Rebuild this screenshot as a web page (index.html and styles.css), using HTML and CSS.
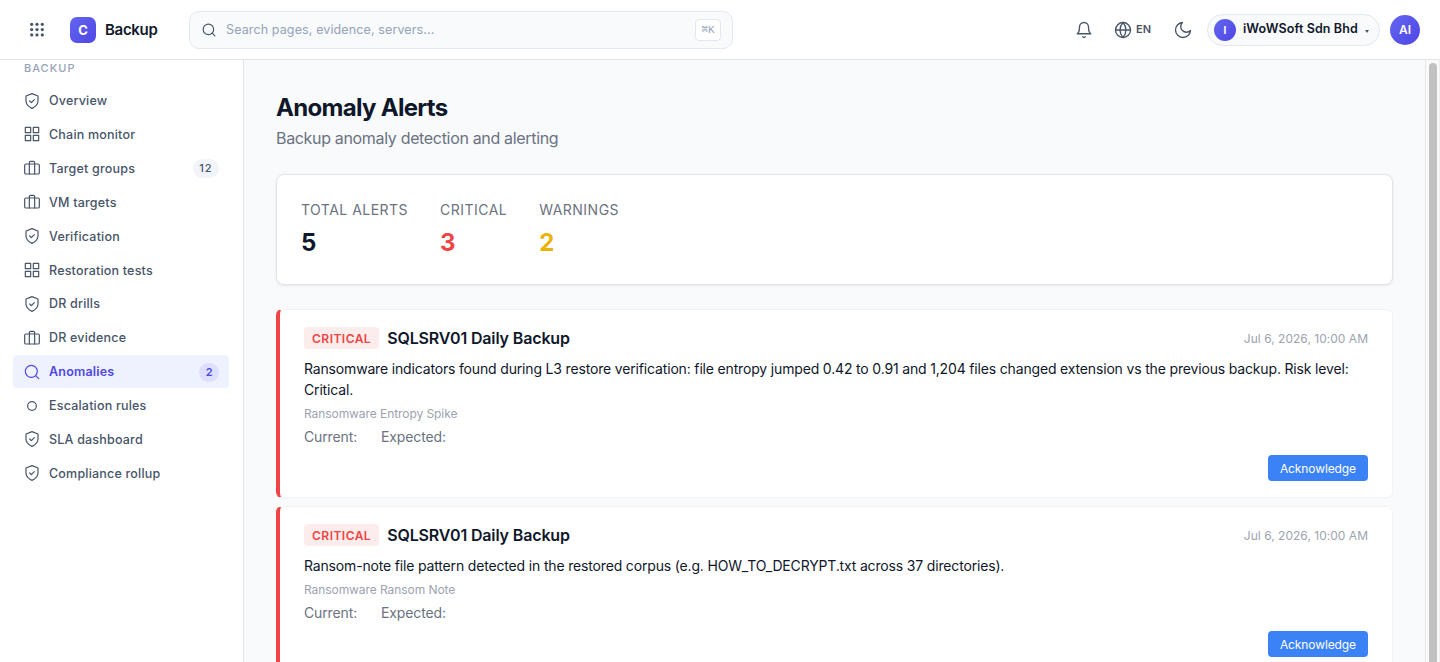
FILE: index.html
```
<!DOCTYPE html>
<html lang="en">
<head>
    <meta charset="UTF-8">
    <meta name="viewport" content="width=device-width, initial-scale=1.0">
    <title>Anomaly Alerts - Backup</title>
    <link rel="stylesheet" href="styles.css">
</head>
<body>
    <!-- icons shared by the sidebar and the top bar -->
    <svg class="sprite">
        <symbol id="i-shield" viewBox="0 0 24 24"><path d="M12 23s9-4 9-11V4.500l-9-3.500-9 3.500V12c0 7 9 11 9 11z"/><path d="m8.500 12 2.500 2.500 4.500-4.500"/></symbol>
        <symbol id="i-grid" viewBox="0 0 24 24"><rect x="2" y="2" width="8" height="8"/><rect x="14" y="2" width="8" height="8"/><rect x="14" y="14" width="8" height="8"/><rect x="2" y="14" width="8" height="8"/></symbol>
        <symbol id="i-case" viewBox="0 0 24 24"><rect x="1" y="6" width="22" height="15" rx="2"/><path d="M16 21V4a2 2 0 0 0-2-2h-4a2 2 0 0 0-2 2v17"/></symbol>
        <symbol id="i-search" viewBox="0 0 24 24"><circle cx="11" cy="11" r="9"/><path d="m22 22-4.5-4.5"/></symbol>
        <symbol id="i-circle" viewBox="0 0 24 24"><circle cx="12" cy="12" r="6.5"/></symbol>
    </svg>

    <header class="topbar">
        <svg class="apps" viewBox="0 0 16 16">
            <circle cx="2.7" cy="2.3" r="1.6"/><circle cx="8" cy="2.3" r="1.6"/><circle cx="13.3" cy="2.3" r="1.6"/>
            <circle cx="2.7" cy="7.6" r="1.6"/><circle cx="8" cy="7.6" r="1.6"/><circle cx="13.3" cy="7.6" r="1.6"/>
            <circle cx="2.7" cy="12.9" r="1.6"/><circle cx="8" cy="12.9" r="1.6"/><circle cx="13.3" cy="12.9" r="1.6"/>
        </svg>
        <div class="logo">C</div>
        <div class="brand">Backup</div>
        <div class="search">
            <svg class="icon"><use href="#i-search"/></svg>
            <span class="placeholder">Search pages, evidence, servers...</span>
            <kbd>⌘K</kbd>
        </div>
        <div class="actions">
            <svg class="icon bell" viewBox="0 0 24 24"><path d="M18 8A6 6 0 0 0 6 8c0 7-3 9-3 9h18s-3-2-3-9"/><path d="M13.73 21a2 2 0 0 1-3.46 0"/></svg>
            <svg class="icon globe" viewBox="0 0 24 24"><circle cx="12" cy="12" r="10"/><path d="M2 12h20"/><path d="M12 2a15.3 15.3 0 0 1 4 10 15.3 15.3 0 0 1-4 10 15.3 15.3 0 0 1-4-10 15.3 15.3 0 0 1 4-10z"/></svg>
            <span class="lang">EN</span>
            <svg class="icon moon" viewBox="0 0 24 24"><path d="M22 12.79A10 10 0 1 1 11.21 2 7.6 7.6 0 0 0 22 12.79z"/></svg>
            <div class="tenant">
                <span class="tenant-dot">I</span>
                <span class="tenant-name">iWoWSoft Sdn Bhd</span>
                <span class="caret"></span>
            </div>
            <div class="avatar">AI</div>
        </div>
    </header>

    <div class="layout">
        <nav class="sidebar">
            <div class="nav-title">BACKUP</div>
            <a class="nav-item"><svg class="icon"><use href="#i-shield"/></svg>Overview</a>
            <a class="nav-item"><svg class="icon"><use href="#i-grid"/></svg>Chain monitor</a>
            <a class="nav-item"><svg class="icon"><use href="#i-case"/></svg>Target groups<span class="count">12</span></a>
            <a class="nav-item"><svg class="icon"><use href="#i-case"/></svg>VM targets</a>
            <a class="nav-item"><svg class="icon"><use href="#i-shield"/></svg>Verification</a>
            <a class="nav-item"><svg class="icon"><use href="#i-grid"/></svg>Restoration tests</a>
            <a class="nav-item"><svg class="icon"><use href="#i-shield"/></svg>DR drills</a>
            <a class="nav-item"><svg class="icon"><use href="#i-case"/></svg>DR evidence</a>
            <a class="nav-item active"><svg class="icon"><use href="#i-search"/></svg>Anomalies<span class="count">2</span></a>
            <a class="nav-item"><svg class="icon"><use href="#i-circle"/></svg>Escalation rules</a>
            <a class="nav-item"><svg class="icon"><use href="#i-shield"/></svg>SLA dashboard</a>
            <a class="nav-item"><svg class="icon"><use href="#i-shield"/></svg>Compliance rollup</a>
        </nav>

        <main class="content">
            <h1>Anomaly Alerts</h1>
            <p class="subtitle">Backup anomaly detection and alerting</p>

            <section class="stats">
                <div>
                    <div class="stat-label">TOTAL ALERTS</div>
                    <div class="stat-value">5</div>
                </div>
                <div>
                    <div class="stat-label">CRITICAL</div>
                    <div class="stat-value red">3</div>
                </div>
                <div>
                    <div class="stat-label">WARNINGS</div>
                    <div class="stat-value yellow">2</div>
                </div>
            </section>

            <article class="alert">
                <div class="alert-head">
                    <span class="badge">CRITICAL</span>
                    <h2>SQLSRV01 Daily Backup</h2>
                    <time>Jul 6, 2026, 10:00 AM</time>
                </div>
                <p class="message">Ransomware indicators found during L3 restore verification: file entropy jumped 0.42 to 0.91 and 1,204 files changed extension vs the previous backup. Risk level: Critical.</p>
                <p class="type">Ransomware Entropy Spike</p>
                <div class="values"><span>Current:</span><span>Expected:</span></div>
                <div class="buttons"><button type="button">Acknowledge</button></div>
            </article>

            <article class="alert">
                <div class="alert-head">
                    <span class="badge">CRITICAL</span>
                    <h2>SQLSRV01 Daily Backup</h2>
                    <time>Jul 6, 2026, 10:00 AM</time>
                </div>
                <p class="message">Ransom-note file pattern detected in the restored corpus (e.g. HOW_TO_DECRYPT.txt across 37 directories).</p>
                <p class="type">Ransomware Ransom Note</p>
                <div class="values"><span>Current:</span><span>Expected:</span></div>
                <div class="buttons"><button type="button">Acknowledge</button></div>
            </article>
        </main>

        <div class="scrollbar"><div class="thumb"></div></div>
    </div>
</body>
</html>
```
FILE: styles.css
```
* {
    box-sizing: border-box;
}

body {
    margin: 0;
    height: 100vh;
    overflow: hidden;
    display: flex;
    flex-direction: column;
    font-family: Inter, "Liberation Sans", sans-serif;
    font-size: 14px;
    line-height: 1.5;
    color: #0f172a;
    background: #f8fafc;
}

h1, h2, p {
    margin: 0;
}

.sprite {
    display: none;
}

.icon {
    width: 16px;
    height: 16px;
    flex: none;
    fill: none;
    stroke: currentColor;
    stroke-width: 1.8;
    stroke-linecap: round;
    stroke-linejoin: round;
}

/* top bar */
.topbar {
    flex: none;
    height: 60px;
    display: flex;
    align-items: center;
    padding: 0 20px 0 29px;
    background: #fff;
    border-bottom: 1px solid #e2e4e9;
    color: #475569;
}

.apps {
    width: 16px;
    height: 16px;
    fill: #475569;
}

.logo {
    width: 26px;
    height: 26px;
    margin-left: 25px;
    border-radius: 7px;
    background: linear-gradient(135deg, #6366f1, #4f46e5);
    color: #fff;
    font-size: 13px;
    font-weight: 700;
    line-height: 27px;
    text-align: center;
}

.brand {
    width: 84px;
    margin-left: 9px;
    padding-top: 2px;
    color: #0f172a;
    font-size: 15px;
    font-weight: 600;
    letter-spacing: -0.3px;
}

.search {
    width: 544px;
    height: 38px;
    display: flex;
    align-items: center;
    padding: 0 11px;
    border: 1px solid #e2e8f0;
    border-radius: 10px;
    background: #f8fafc;
}

.search .icon {
    width: 14px;
    height: 14px;
    margin-left: 1px;
    stroke-width: 2;
}

.placeholder {
    flex: 1;
    margin-left: 10px;
    padding-top: 2px;
    color: #94a3b8;
    font-size: 12.5px;
    letter-spacing: 0.12px;
}

kbd {
    width: 26px;
    height: 22px;
    border: 1px solid #e2e8f0;
    border-radius: 4px;
    background: #fff;
    color: #94a3b8;
    font-family: "Liberation Mono", monospace;
    font-size: 11px;
    line-height: 20px;
    text-align: center;
}

.actions {
    display: flex;
    align-items: center;
    margin-left: auto;
}

.bell {
    width: 18px;
    height: 18px;
}

.globe {
    width: 18px;
    height: 18px;
    margin-left: 21px;
}

.lang {
    width: 18px;
    margin-left: 4px;
    font-size: 11px;
    font-weight: 600;
}

.moon {
    width: 18px;
    height: 18px;
    margin-left: 20px;
}

.tenant {
    width: 173px;
    height: 32px;
    display: flex;
    align-items: center;
    margin-left: 15px;
    padding: 0 6px;
    border: 1px solid #e2e8f0;
    border-radius: 16px;
    background: #f8fafc;
}

.tenant-dot {
    flex: none;
    width: 22px;
    height: 22px;
    border-radius: 50%;
    background: linear-gradient(135deg, #6366f1, #4f46e5);
    color: #fff;
    font-size: 10px;
    font-weight: 700;
    line-height: 23px;
    text-align: center;
}

.tenant-name {
    margin-left: 7px;
    color: #0f172a;
    font-size: 12.5px;
    font-weight: 600;
    letter-spacing: 0.1px;
    white-space: nowrap;
}

.caret {
    margin: 3px 0 0 7px;
    border: 2px solid transparent;
    border-top: 3px solid #475569;
    border-bottom: 0;
}

.avatar {
    width: 30px;
    height: 30px;
    margin-left: 10px;
    border-radius: 50%;
    background: linear-gradient(135deg, #6366f1, #4f46e5);
    color: #fff;
    font-size: 12px;
    font-weight: 600;
    line-height: 30px;
    text-align: center;
}

.layout {
    flex: 1;
    min-height: 0;
    display: flex;
}

/* sidebar */
.sidebar {
    width: 244px;
    flex: none;
    padding: 0 14px 0 13px;
    background: #fff;
    border-right: 1px solid #e2e4e9;
}

.nav-title {
    height: 24px;
    padding-left: 11px;
    color: #94a3b8;
    font-size: 11px;
    font-weight: 500;
    letter-spacing: 1px;
}

.nav-item {
    height: 33px;
    display: flex;
    align-items: center;
    margin-bottom: 0.9px;
    padding: 2px 10px 0 11px;
    border-radius: 4px;
    color: #475569;
    font-size: 12.5px;
    font-weight: 500;
    letter-spacing: 0.2px;
}

.nav-item .icon {
    margin: -2px 9px 0 0;
}

.nav-item.active {
    background: #eef2ff;
    color: #4f46e5;
    font-weight: 600;
}

.count {
    margin: -1px 0 0 auto;
    padding: 0 6.5px;
    border-radius: 10px;
    background: #f1f5f9;
    font-size: 11px;
    font-weight: 500;
    letter-spacing: 0.9px;
    line-height: 19px;
}

.active .count {
    background: #dddffe;
    font-weight: 600;
    letter-spacing: 0;
}

/* page */
.content {
    flex: 1;
    min-width: 0;
    overflow: hidden;
    padding: 32px;
}

h1 {
    padding-top: 1px;
    font-size: 24px;
    font-weight: 700;
    letter-spacing: -0.7px;
    line-height: 30px;
}

.subtitle {
    margin-top: 3px;
    margin-bottom: 24px;
    color: #6b7280;
    font-size: 16px;
    letter-spacing: -0.33px;
}

.stats {
    display: flex;
    gap: 32px;
    margin-bottom: 24px;
    padding: 24px;
    border: 1px solid #e2e4e9;
    border-radius: 8px;
    background: #fff;
    box-shadow: 0 1px 3px rgba(0, 0, 0, 0.08);
}

.stat-label {
    margin-bottom: 5px;
    color: #6b7280;
    letter-spacing: 0.48px;
}

.stat-value {
    margin-bottom: -1px;
    font-size: 24px;
    font-weight: 700;
}

.red {
    color: #ef4444;
}

.yellow {
    color: #eab308;
}

.alert {
    margin-bottom: 8px;
    padding: 16px 24px;
    border: 1px solid #f1f3f6;
    border-left: 4px solid #ef4444;
    border-radius: 6px;
    background: #fff;
}

.alert-head {
    display: flex;
    align-items: center;
    gap: 8px;
    margin-bottom: 8px;
}

.badge {
    padding: 3px 8px 1px;
    border-radius: 4px;
    background: #fdecec;
    color: #ef4444;
    font-size: 12px;
    font-weight: 600;
    letter-spacing: 0.48px;
}

h2 {
    font-size: 16px;
    font-weight: 600;
    letter-spacing: -0.14px;
}

time {
    margin-left: auto;
    padding-top: 1px;
    color: #9ca3af;
    font-size: 12px;
    letter-spacing: 0.02px;
}

.message {
    letter-spacing: -0.165px;
}

.type {
    margin: 5px 0 3px;
    color: #9ca3af;
    font-size: 12px;
    letter-spacing: -0.07px;
}

.values {
    display: flex;
    gap: 24px;
    color: #6b7280;
    letter-spacing: -0.13px;
}

.buttons {
    display: flex;
    justify-content: flex-end;
    margin-top: 8px;
}

button {
    padding: 5px 12px 3px;
    border: none;
    border-radius: 4px;
    background: #3b82f6;
    color: #fff;
    font-family: inherit;
    font-size: 12px;
    letter-spacing: -0.1px;
    line-height: 18px;
}

.scrollbar {
    width: 15px;
    flex: none;
    padding: 3px 2px 0 3px;
    border-left: 1px solid #e6e6e6;
    border-right: 1px solid #ededed;
    background: #fafafa;
}

.thumb {
    width: 8px;
    height: 640px;
    border-radius: 4px;
    background: #c1c1c1;
}
```
